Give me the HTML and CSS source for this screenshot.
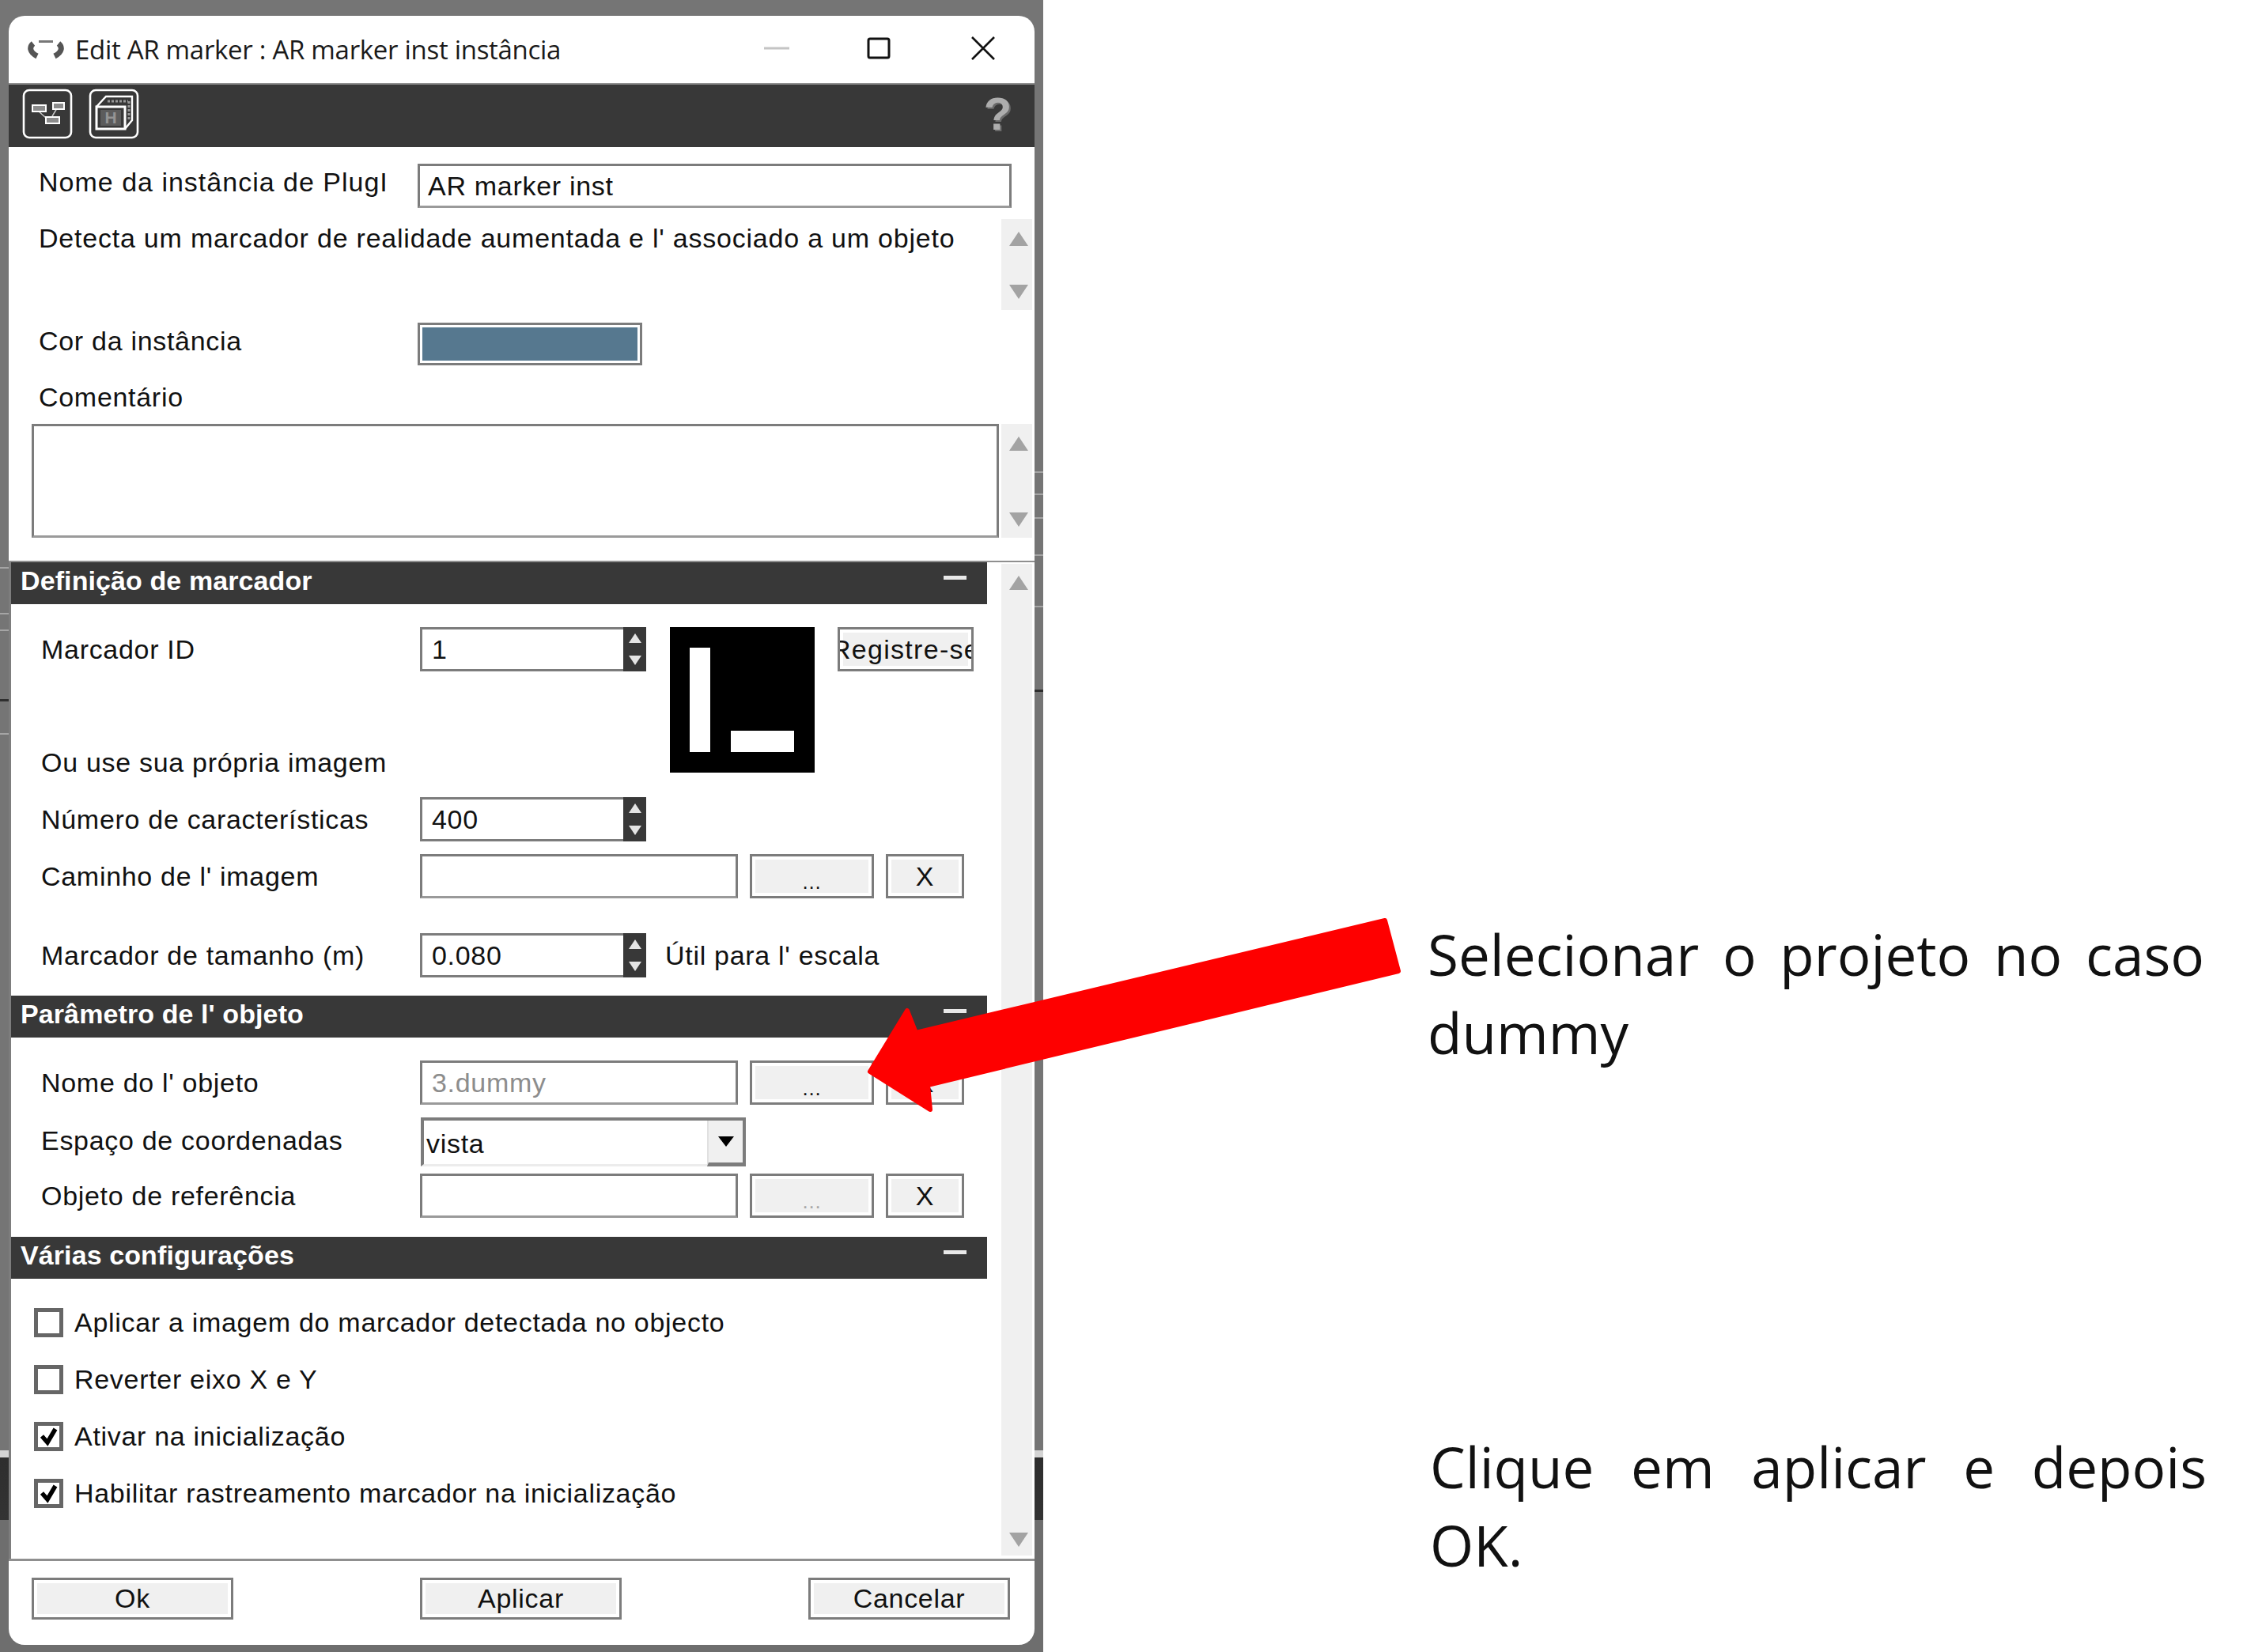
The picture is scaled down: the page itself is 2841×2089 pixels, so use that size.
FILE: index.html
```html
<!DOCTYPE html>
<html lang="pt">
<head>
  <meta charset="UTF-8" />
  <title>Edit AR marker</title>
  <link rel="stylesheet" href="styles.css">
</head>
<body>
  <div class="page">
    <div class="backdrop">
      <div class="window">
        <div class="titlebar">
          <svg class="app-icon" viewBox="0 0 46 26"><path d="M14 2.5h18" stroke="#777" stroke-width="3" fill="none"/><path d="M7 5C2 9 2 16 12 21M39 5C44 9 44 16 34 21" stroke="#555" stroke-width="7" fill="none"/></svg>
          <span class="title-text">Edit AR marker : AR marker inst instância</span>
          <svg class="win-btn win-min" viewBox="0 0 32 4"><path d="M0 2h32" stroke="#c4c4c4" stroke-width="3"/></svg>
          <svg class="win-btn win-max" viewBox="0 0 30 28"><rect x="2" y="2" width="26" height="24" rx="2" fill="none" stroke="#111" stroke-width="3"/></svg>
          <svg class="win-btn win-close" viewBox="0 0 30 30"><path d="M1 1l28 28M29 1L1 29" stroke="#111" stroke-width="2.6"/></svg>
        </div>

        <div class="toolbar">
          <svg class="tool-icon" viewBox="0 0 64 64">
            <rect x="2" y="2" width="60" height="60" rx="7" fill="none" stroke="#fff" stroke-width="2.6"/>
            <path d="M20 28l10 9M44 25l-6 10" stroke="#c8c8c8" stroke-width="1.5"/>
            <rect x="13" y="21" width="17" height="8" fill="#8c8c8c" stroke="#fff" stroke-width="2"/>
            <rect x="39" y="18" width="14" height="8" fill="#8c8c8c" stroke="#fff" stroke-width="2"/>
            <rect x="30" y="36" width="17" height="8" fill="#8c8c8c" stroke="#fff" stroke-width="2"/>
          </svg>
          <svg class="tool-icon" viewBox="0 0 64 64">
            <rect x="2" y="2" width="60" height="60" rx="7" fill="none" stroke="#fff" stroke-width="2.6"/>
            <path d="M10 23L22 10h33v30L46 51" fill="none" stroke="#fff" stroke-width="2.4"/>
            <path d="M24 16h26M51 16v24" fill="none" stroke="#999" stroke-width="3" stroke-dasharray="3 2"/>
            <rect x="10" y="23" width="36" height="28" fill="#383838" stroke="#fff" stroke-width="3"/>
            <rect x="15" y="27" width="26" height="20" fill="#5c5c5c"/>
            <text x="28" y="44" class="cube-h">H</text>
          </svg>
          <span class="help">?</span>
        </div>

        <div class="top-panel">
          <div class="name-row">
            <span class="top-label clip">Nome da instância de PlugI</span>
            <div class="field name-field">AR marker inst</div>
          </div>
          <div class="desc-row">
            <p class="desc">Detecta um marcador de realidade aumentada e l' associado a um objeto</p>
            <div class="scrollbar"><i class="arrow-up"></i><i class="arrow-down"></i></div>
          </div>
          <div class="color-row">
            <span class="top-label">Cor da instância</span>
            <div class="swatch"></div>
          </div>
          <div class="comment-label">Comentário</div>
          <div class="comment-row">
            <div class="field comment-box"></div>
            <div class="scrollbar"><i class="arrow-up"></i><i class="arrow-down"></i></div>
          </div>
        </div>

        <div class="main-panel">
          <div class="sections">
            <div class="section-head"><span>Definição de marcador</span><b class="collapse"></b></div>
            <div class="marker-block">
              <div class="marker-left">
                <div class="row marker-row">
                  <span class="label">Marcador ID</span>
                  <div class="spin"><span class="spin-val">1</span><div class="spin-btns"><i class="mini-up"></i><i class="mini-down"></i></div></div>
                </div>
                <div class="own-image">Ou use sua própria imagem</div>
              </div>
              <div class="marker-img"><div class="bar-tall"></div><div class="bar-low"></div></div>
              <div class="btn register"><span>Registre-se</span></div>
            </div>
            <div class="row features-row">
              <span class="label">Número de características</span>
              <div class="spin"><span class="spin-val">400</span><div class="spin-btns"><i class="mini-up"></i><i class="mini-down"></i></div></div>
            </div>
            <div class="row path-row">
              <span class="label">Caminho de l' imagem</span>
              <div class="field path-field"></div>
              <div class="btn dots">...</div>
              <div class="btn clear">X</div>
            </div>
            <div class="row size-row">
              <span class="label">Marcador de tamanho (m)</span>
              <div class="spin"><span class="spin-val">0.080</span><div class="spin-btns"><i class="mini-up"></i><i class="mini-down"></i></div></div>
              <span class="hint">Útil para l' escala</span>
            </div>

            <div class="section-head head-object"><span>Parâmetro de l' objeto</span><b class="collapse"></b></div>
            <div class="row object-row">
              <span class="label">Nome do l' objeto</span>
              <div class="field path-field muted">3.dummy</div>
              <div class="btn dots">...</div>
              <div class="btn clear">X</div>
            </div>
            <div class="row coord-row">
              <span class="label coord-label">Espaço de coordenadas</span>
              <div class="select"><span>vista</span><div class="select-btn"><i></i></div></div>
            </div>
            <div class="row ref-row">
              <span class="label">Objeto de referência</span>
              <div class="field path-field"></div>
              <div class="btn dots disabled">...</div>
              <div class="btn clear">X</div>
            </div>

            <div class="section-head head-misc"><span>Várias configurações</span><b class="collapse"></b></div>
            <div class="checks">
              <label class="check"><span class="box"></span>Aplicar a imagem do marcador detectada no objecto</label>
              <label class="check"><span class="box"></span>Reverter eixo X e Y</label>
              <label class="check"><span class="box"><svg viewBox="0 0 27 27"><path d="M5 13l7 8L22 4" fill="none" stroke="#000" stroke-width="5.5"/></svg></span>Ativar na inicialização</label>
              <label class="check"><span class="box"><svg viewBox="0 0 27 27"><path d="M5 13l7 8L22 4" fill="none" stroke="#000" stroke-width="5.5"/></svg></span>Habilitar rastreamento marcador na inicialização</label>
            </div>
          </div>
          <div class="scrollbar main-scroll"><i class="arrow-up"></i><i class="arrow-down"></i></div>
        </div>

        <div class="footer">
          <div class="btn foot-btn">Ok</div>
          <div class="btn foot-btn">Aplicar</div>
          <div class="btn foot-btn">Cancelar</div>
        </div>
      </div>
    </div>

    <div class="notes">
      <p class="note note-first">Selecionar o projeto no caso dummy</p>
      <p class="note note-second">Clique em aplicar e depois OK.</p>
    </div>

    <svg class="big-arrow" viewBox="0 0 2841 2089">
      <polygon points="1751,1164 1768,1228 1173,1372 1176,1403 1100,1355 1147,1278 1158,1306" fill="#fe0000" stroke="#fe0000" stroke-width="6" stroke-linejoin="round"/>
    </svg>
  </div>
</body>
</html>
```

FILE: styles.css
```css
html, body {
  margin: 0;
  background: #fff;
}

.page {
  position: relative;
  display: flex;
  width: 2841px;
  height: 2089px;
  overflow: hidden;
  font-family: "Liberation Sans", Arial, sans-serif;
  font-size: 34px;
  letter-spacing: 0.7px;
  color: #111;
}

/* what shows of the desktop round the window */
.backdrop {
  width: 1319px;
  height: 2089px;
  flex: none;
  box-sizing: border-box;
  padding: 20px 11px 9px;
  background:
    linear-gradient(to bottom,
      transparent 717px, #a5a5a5 717px, #a5a5a5 719px,
      transparent 719px, transparent 775px, #a5a5a5 775px, #a5a5a5 777px,
      transparent 777px, transparent 796px, #a5a5a5 796px, #a5a5a5 798px,
      transparent 798px, transparent 884px, #2e2e2e 884px, #2e2e2e 887px,
      transparent 887px, transparent 927px, #a5a5a5 927px, #a5a5a5 929px,
      transparent 929px) left top / 11px 100% no-repeat,
    linear-gradient(to bottom,
      transparent 596px, #a5a5a5 596px, #a5a5a5 598px,
      transparent 598px, transparent 624px, #a5a5a5 624px, #a5a5a5 626px,
      transparent 626px, transparent 654px, #a5a5a5 654px, #a5a5a5 656px,
      transparent 656px, transparent 701px, #a5a5a5 701px, #a5a5a5 703px,
      transparent 703px, transparent 766px, #a5a5a5 766px, #a5a5a5 768px,
      transparent 768px, transparent 872px, #2e2e2e 872px, #2e2e2e 875px,
      transparent 875px) right top / 11px 100% no-repeat,
    linear-gradient(to bottom,
      #757575 1834px, #d4d4d4 1834px, #d4d4d4 1843px,
      #2e2e2e 1843px, #333 1922px, #6e6e6e 1922px);
}

.window {
  display: flex;
  flex-direction: column;
  height: 2060px;
  background: #fff;
  border-radius: 20px;
  overflow: hidden;
}

/* title bar */
.titlebar {
  display: flex;
  align-items: center;
  height: 85px;
  flex: none;
  padding-left: 24px;
}
.app-icon {
  width: 46px;
  height: 26px;
}
.title-text {
  margin-left: 14px;
  font-family: "Open Sans", sans-serif;
  font-size: 33px;
  letter-spacing: -0.3px;
  color: #1a1a1a;
  flex: 1;
}
.win-btn {
  flex: none;
  margin-bottom: 4px;
}
.win-min {
  width: 32px;
  height: 4px;
  margin-right: 98px;
}
.win-max {
  width: 30px;
  height: 28px;
  margin-right: 102px;
}
.win-close {
  width: 30px;
  height: 30px;
  margin-right: 50px;
}

.toolbar {
  display: flex;
  align-items: center;
  gap: 20px;
  height: 81px;
  flex: none;
  padding: 0 28px 6px 17px;
  background: #383838;
  border-top: 2px solid #8f8f8f;
  box-sizing: border-box;
}
.tool-icon {
  width: 64px;
  height: 64px;
}
.cube-h {
  font-family: "Liberation Sans", sans-serif;
  font-size: 21px;
  font-weight: bold;
  letter-spacing: 0;
  fill: #949494;
  text-anchor: middle;
}
.help {
  margin-left: auto;
  font-size: 58px;
  font-weight: bold;
  line-height: 1;
  color: #adadad;
  text-shadow: 2px 2px 0 #6a6a6a;
}

/* top area */
.top-panel {
  height: 525px;
  flex: none;
  box-sizing: border-box;
  padding-top: 21px;
  border-bottom: 2px solid #8f8f8f;
}
.name-row,
.color-row {
  display: flex;
  padding-left: 38px;
}
.name-row {
  height: 56px;
}
.top-label {
  width: 479px;
  flex: none;
  line-height: 46px;
}
.clip {
  width: 438px;
  margin-right: 41px;
  overflow: hidden;
  white-space: nowrap;
  letter-spacing: 1px;
}
.field {
  box-sizing: border-box;
  background: #fff;
  border: 3px solid #7c7c7c;
  border-bottom-color: #9a9a9a;
}
.name-field {
  width: 751px;
  height: 56px;
  padding: 0 10px;
  line-height: 50px;
}
.desc-row {
  display: flex;
  height: 115px;
  margin-top: 14px;
  padding-left: 38px;
}
.desc {
  flex: 1;
  margin: 5px 0 0;
  line-height: 38px;
  white-space: nowrap;
  letter-spacing: 0.78px;
}
.scrollbar {
  display: flex;
  flex-direction: column;
  justify-content: space-between;
  align-items: center;
  flex: none;
  width: 39px;
  margin-right: 3px;
  padding: 16px 0 14px 5px;
  box-sizing: border-box;
  background: #f0f0f0;
}
.arrow-up,
.arrow-down {
  width: 0;
  height: 0;
  border-left: 12px solid transparent;
  border-right: 12px solid transparent;
}
.arrow-up {
  border-bottom: 18px solid #a3a3a3;
}
.arrow-down {
  border-top: 18px solid #a3a3a3;
}
.color-row {
  height: 54px;
  margin-top: 16px;
}
.swatch {
  width: 284px;
  height: 54px;
  box-sizing: border-box;
  background: #56788f;
  border: 3px solid #7c7c7c;
  box-shadow: inset 0 0 0 3px #fff;
}
.comment-label {
  height: 40px;
  margin-top: 20px;
  padding-left: 38px;
  line-height: 40px;
}
.comment-row {
  display: flex;
  justify-content: space-between;
  height: 144px;
  margin-top: 14px;
  padding-left: 29px;
}
.comment-box {
  width: 1223px;
}

/* main area */
.main-panel {
  display: flex;
  justify-content: space-between;
  flex: none;
  height: 1260px;
  border-left: 3px solid #7d7d7d;
}
.main-scroll {
  height: 1254px;
  margin-top: 2px;
  padding: 15px 0 11px 5px;
}
.sections {
  width: 1234px;
}
.section-head {
  display: flex;
  align-items: center;
  justify-content: space-between;
  height: 53px;
  box-sizing: border-box;
  padding: 0 26px 6px 12px;
  background: #383838;
  color: #fff;
  font-weight: bold;
  letter-spacing: 0.1px;
}
.collapse {
  width: 29px;
  height: 5px;
  margin-bottom: 8px;
  background: #e8e8e8;
}
.row {
  display: flex;
  align-items: center;
  height: 56px;
  padding-left: 38px;
}
.label {
  width: 479px;
  flex: none;
  white-space: nowrap;
}
.coord-label {
  margin-bottom: 4px;
}

.marker-block {
  display: flex;
  height: 183px;
  padding-left: 38px;
  padding-top: 29px;
}
.marker-left {
  width: 795px;
  flex: none;
}
.marker-row {
  padding-left: 0;
}
.own-image {
  margin-top: 95px;
  line-height: 40px;
}
.marker-img {
  position: relative;
  width: 183px;
  height: 184px;
  flex: none;
  background: #000;
}
.bar-tall {
  position: absolute;
  left: 25px;
  top: 26px;
  width: 26px;
  height: 132px;
  background: #fff;
}
.bar-low {
  position: absolute;
  left: 77px;
  top: 131px;
  width: 80px;
  height: 27px;
  background: #fff;
}
.btn {
  display: flex;
  align-items: center;
  justify-content: center;
  flex: none;
  box-sizing: border-box;
  background: #f0f0f0;
  border: 3px solid #7c7c7c;
  box-shadow: inset 0 0 0 4px #fff;
}
.register {
  width: 172px;
  height: 56px;
  margin-left: 29px;
  overflow: hidden;
  white-space: nowrap;
  letter-spacing: 1.3px;
}
.spin {
  display: flex;
  width: 286px;
  height: 56px;
  flex: none;
  box-sizing: border-box;
  border: 3px solid #7c7c7c;
  border-right: 0;
  background: #fff;
}
.spin-val {
  flex: 1;
  padding-left: 12px;
  line-height: 50px;
}
.spin-btns {
  display: flex;
  flex-direction: column;
  justify-content: space-around;
  align-items: center;
  width: 29px;
  margin: -3px 0;
  background: #383838;
}
.mini-up,
.mini-down {
  width: 0;
  height: 0;
  border-left: 8px solid transparent;
  border-right: 8px solid transparent;
}
.mini-up {
  border-bottom: 12px solid #e4e4e4;
}
.mini-down {
  border-top: 12px solid #e4e4e4;
}

.features-row {
  margin-top: 32px;
}
.path-row {
  margin-top: 16px;
}
.size-row {
  margin-top: 44px;
}
.hint {
  margin-left: 24px;
}
.path-field {
  width: 402px;
  height: 56px;
  padding-left: 12px;
  line-height: 50px;
}
.muted {
  color: #8d8d8d;
}
.dots {
  width: 157px;
  height: 56px;
  margin-left: 15px;
  padding-top: 14px;
  font-size: 26px;
}
.disabled {
  color: #a8a8a8;
}
.clear {
  width: 99px;
  height: 56px;
  margin-left: 15px;
}

.head-object {
  margin-top: 23px;
}
.object-row {
  margin-top: 29px;
}
.coord-row {
  height: 62px;
  margin-top: 16px;
}
.select {
  display: flex;
  align-items: center;
  width: 411px;
  height: 62px;
  box-sizing: border-box;
  margin-left: 1px;
  padding-left: 3px;
  border: 4px solid #7c7c7c;
  border-right: 0;
  border-bottom: 3px solid #ececec;
  background: #fff;
}
.select span {
  flex: 1;
  padding-top: 4px;
}
.select-btn {
  display: flex;
  align-items: center;
  justify-content: center;
  width: 49px;
  height: 58px;
  margin-bottom: -3px;
  box-sizing: border-box;
  border-left: 2px solid #e0e0e0;
  border-right: 4px solid #7c7c7c;
  border-bottom: 5px solid #7c7c7c;
  background: #f0f0f0;
}
.select-btn i {
  width: 0;
  height: 0;
  border-left: 10px solid transparent;
  border-right: 10px solid transparent;
  border-top: 13px solid #000;
}
.ref-row {
  margin-top: 9px;
}
.head-misc {
  margin-top: 24px;
}

.checks {
  display: flex;
  flex-direction: column;
  gap: 36px;
  margin-top: 37px;
  padding-left: 29px;
}
.check {
  display: flex;
  align-items: center;
  gap: 14px;
  height: 36px;
  white-space: nowrap;
}
.box {
  width: 37px;
  height: 37px;
  flex: none;
  box-sizing: border-box;
  border: 5px solid #666;
  background: #fff;
}
.box svg {
  display: block;
  width: 100%;
  height: 100%;
}

.footer {
  display: flex;
  justify-content: space-between;
  flex: 1;
  padding: 21px 31px 0 29px;
  border-top: 3px solid #8f8f8f;
}
.foot-btn {
  width: 255px;
  height: 53px;
}

/* text on the right of the window */
.notes {
  width: 982px;
  margin-left: 486px;
  font-family: "Open Sans", sans-serif;
  font-size: 71px;
  letter-spacing: 0;
  line-height: 99px;
  color: #111;
}
.note {
  margin: 0;
  text-align: justify;
}
.note-first {
  margin-top: 1157px;
}
.note-second {
  margin-top: 450px;
  margin-left: 3px;
  margin-right: -3px;
}

.big-arrow {
  position: absolute;
  left: 0;
  top: 0;
  width: 2841px;
  height: 2089px;
  pointer-events: none;
}
```
